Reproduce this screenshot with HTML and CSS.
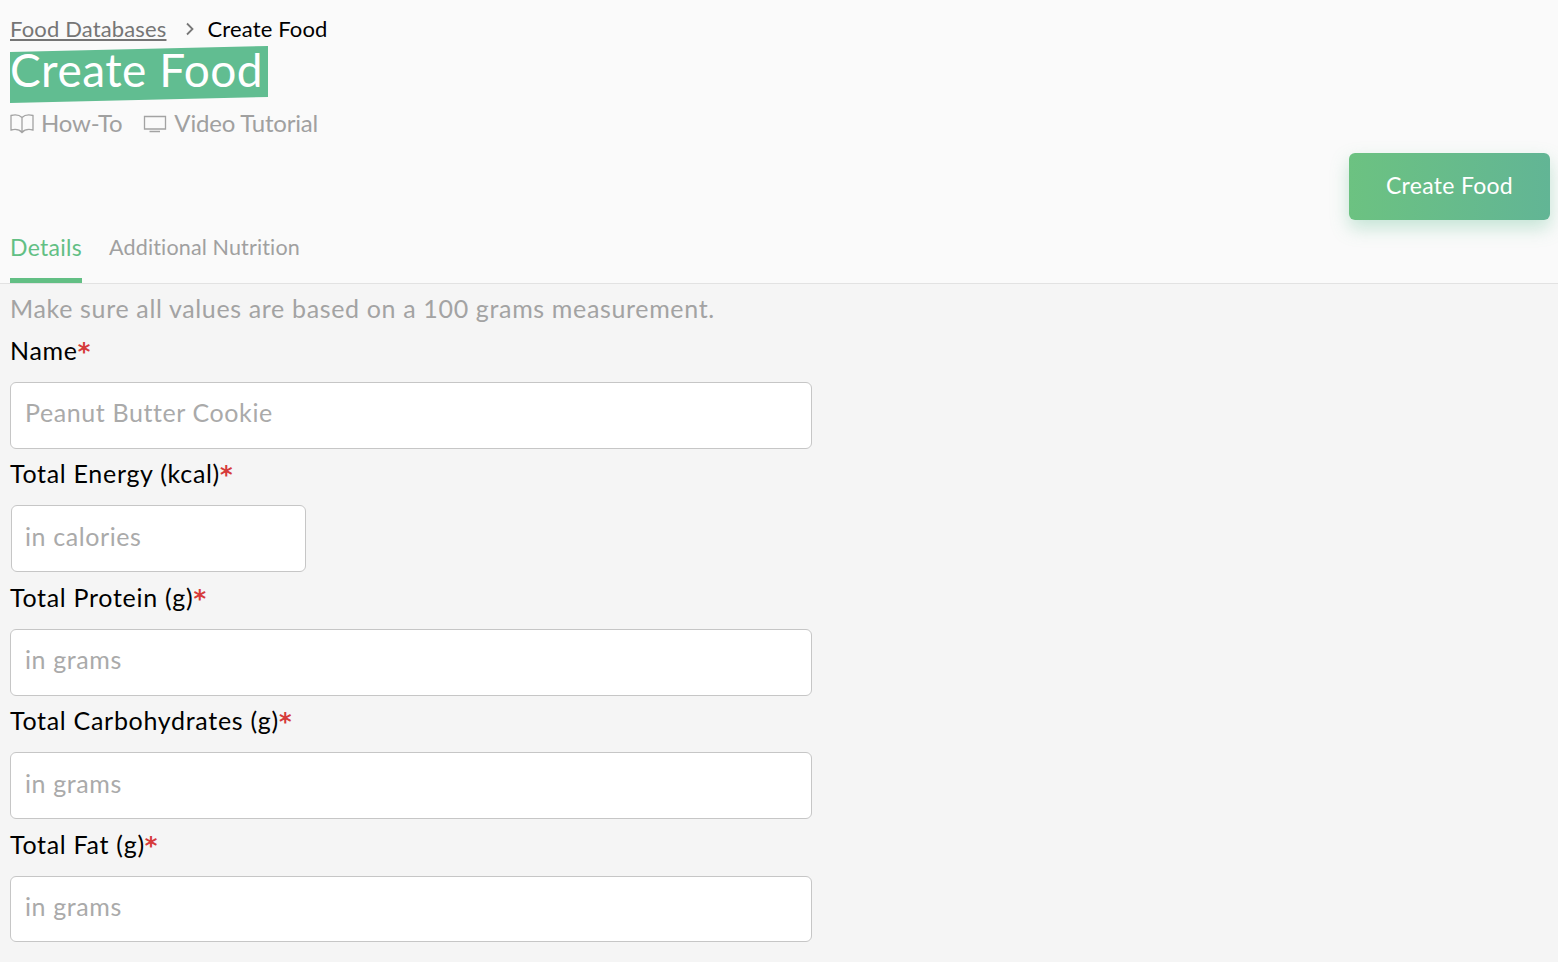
FILE: index.html
```html
<!DOCTYPE html>
<html lang="en">
<head>
    <meta charset="UTF-8">
    <title>Create Food</title>
    <link rel="stylesheet" href="styles.css">
</head>
<body>
    <header class="page-header">
        <nav class="breadcrumb">
            <a class="breadcrumb-link" href="#">Food Databases</a>
            <svg class="breadcrumb-sep" width="10" height="14" viewBox="0 0 10 14"><path d="M2 1.500L7.500 7L2 12.500" fill="none" stroke="#777" stroke-width="1.800"/></svg>
            <span class="breadcrumb-current">Create Food</span>
        </nav>
        <h1 class="page-title">Create Food</h1>
        <div class="help-links">
            <a class="help-link" href="#">
                <svg width="24" height="22" viewBox="0 0 24 22"><path d="M12 5.500C9.500 3 5 2.500 1 3.500V18C5 17 9.500 17.500 12 20.500C14.500 17.500 19 17 23 18V3.500C19 2.500 14.500 3 12 5.500ZM12 5.500V20.500" fill="none" stroke="#a3a3a3" stroke-width="1.300"/></svg>
                How-To
            </a>
            <a class="help-link" href="#">
                <svg width="24" height="22" viewBox="0 0 24 22"><path d="M1.500 4.500H22.500V17H1.500ZM6.500 19.500H17" fill="none" stroke="#a3a3a3" stroke-width="1.300"/></svg>
                Video Tutorial
            </a>
        </div>
        <div class="actions">
            <button class="primary-btn" type="button">Create Food</button>
        </div>
        <div class="tabs">
            <a class="tab tab-active" href="#">Details</a>
            <a class="tab" href="#">Additional Nutrition</a>
        </div>
    </header>

    <main class="form-area">
        <p class="form-note">Make sure all values are based on a 100 grams measurement.</p>

        <label class="field-label">Name<span class="required">*</span></label>
        <input class="field-input" type="text" placeholder="Peanut Butter Cookie">

        <label class="field-label">Total Energy (kcal)<span class="required">*</span></label>
        <input class="field-input field-short" type="text" placeholder="in calories">

        <label class="field-label">Total Protein (g)<span class="required">*</span></label>
        <input class="field-input" type="text" placeholder="in grams">

        <label class="field-label">Total Carbohydrates (g)<span class="required">*</span></label>
        <input class="field-input" type="text" placeholder="in grams">

        <label class="field-label">Total Fat (g)<span class="required">*</span></label>
        <input class="field-input" type="text" placeholder="in grams">
    </main>
</body>
</html>
```

FILE: styles.css
```css
html, body {
    height: 100%;
}

body {
    margin: 0;
    background: #f5f5f5;
    font-family: Lato, "Open Sans", sans-serif;
    color: #000;
    overflow: hidden;
}

.page-header {
    height: 284px;
    box-sizing: border-box;
    padding: 14px 8px 0 10px;
    background: #fafafa;
    border-bottom: 1px solid #e2e2e2;
}

.breadcrumb {
    display: flex;
    align-items: center;
    height: 28px;
    font-size: 22px;
    letter-spacing: 0.15px;
}

.breadcrumb-link {
    color: #757575;
    text-decoration: underline;
}

.breadcrumb-sep {
    margin: 2px 12px 0 19px;
}

.page-title {
    width: fit-content;
    margin: 4px 0 0;
    padding: 0 5px 0 0;
    height: 57px;
    line-height: 48px;
    font-size: 46px;
    font-weight: 400;
    letter-spacing: 0.5px;
    color: #fff;
    background: #61bd91;
    clip-path: polygon(0 6px, 100% 0, 100% 51px, 0 57px);
}

.help-links {
    display: flex;
    gap: 21px;
    margin-top: 5px;
    font-size: 24px;
    line-height: 30px;
    letter-spacing: -0.2px;
}

.help-link {
    display: flex;
    align-items: center;
    gap: 7px;
    color: #a0a0a0;
    text-decoration: none;
}

.actions {
    display: flex;
    justify-content: flex-end;
    margin-top: 15px;
}

.primary-btn {
    width: 201px;
    height: 67px;
    padding: 0 0 4px;
    border: 0;
    border-radius: 6px;
    background: linear-gradient(90deg, #6cc281, #62b595);
    box-shadow: 0 8px 18px rgba(97, 189, 145, 0.35);
    color: #fff;
    font-family: inherit;
    font-size: 23px;
    letter-spacing: 0.3px;
}

.tabs {
    display: flex;
    gap: 27px;
    margin-top: 9px;
}

.tab {
    height: 54px;
    box-sizing: border-box;
    padding-top: 1px;
    font-size: 21.5px;
    line-height: 34px;
    letter-spacing: 0.15px;
    color: #a0a0a0;
    text-decoration: none;
}

.tab-active {
    font-size: 23px;
    letter-spacing: 0.3px;
    color: #62bf84;
    border-bottom: 5px solid #62bf84;
}

.form-area {
    display: flex;
    flex-direction: column;
    align-items: flex-start;
    padding: 0 10px;
}

.form-note {
    margin: 7px 0 0;
    font-size: 25px;
    line-height: 34.4px;
    letter-spacing: 0.65px;
    color: #a3a3a3;
}

.field-label {
    margin: 7.5px 0 15px;
    height: 34px;
    font-size: 25px;
    line-height: 34px;
    letter-spacing: 0.7px;
}

.required {
    font-family: "DejaVu Sans", sans-serif;
    font-weight: 700;
    font-size: 24px;
    letter-spacing: 0;
    color: #d63b3b;
}

.field-input {
    width: 802px;
    height: 67px;
    box-sizing: border-box;
    margin: 0;
    padding: 0 14px 6px;
    border: 1px solid #c6c6c6;
    border-radius: 6px;
    background: #fff;
    font-family: inherit;
    font-size: 25px;
    letter-spacing: 0.6px;
}

.field-input:last-child {
    height: 66px;
}

.field-input::placeholder {
    color: #aaa;
}

.field-short {
    width: 295px;
    margin-left: 1px;
    padding-left: 13px;
}
```
